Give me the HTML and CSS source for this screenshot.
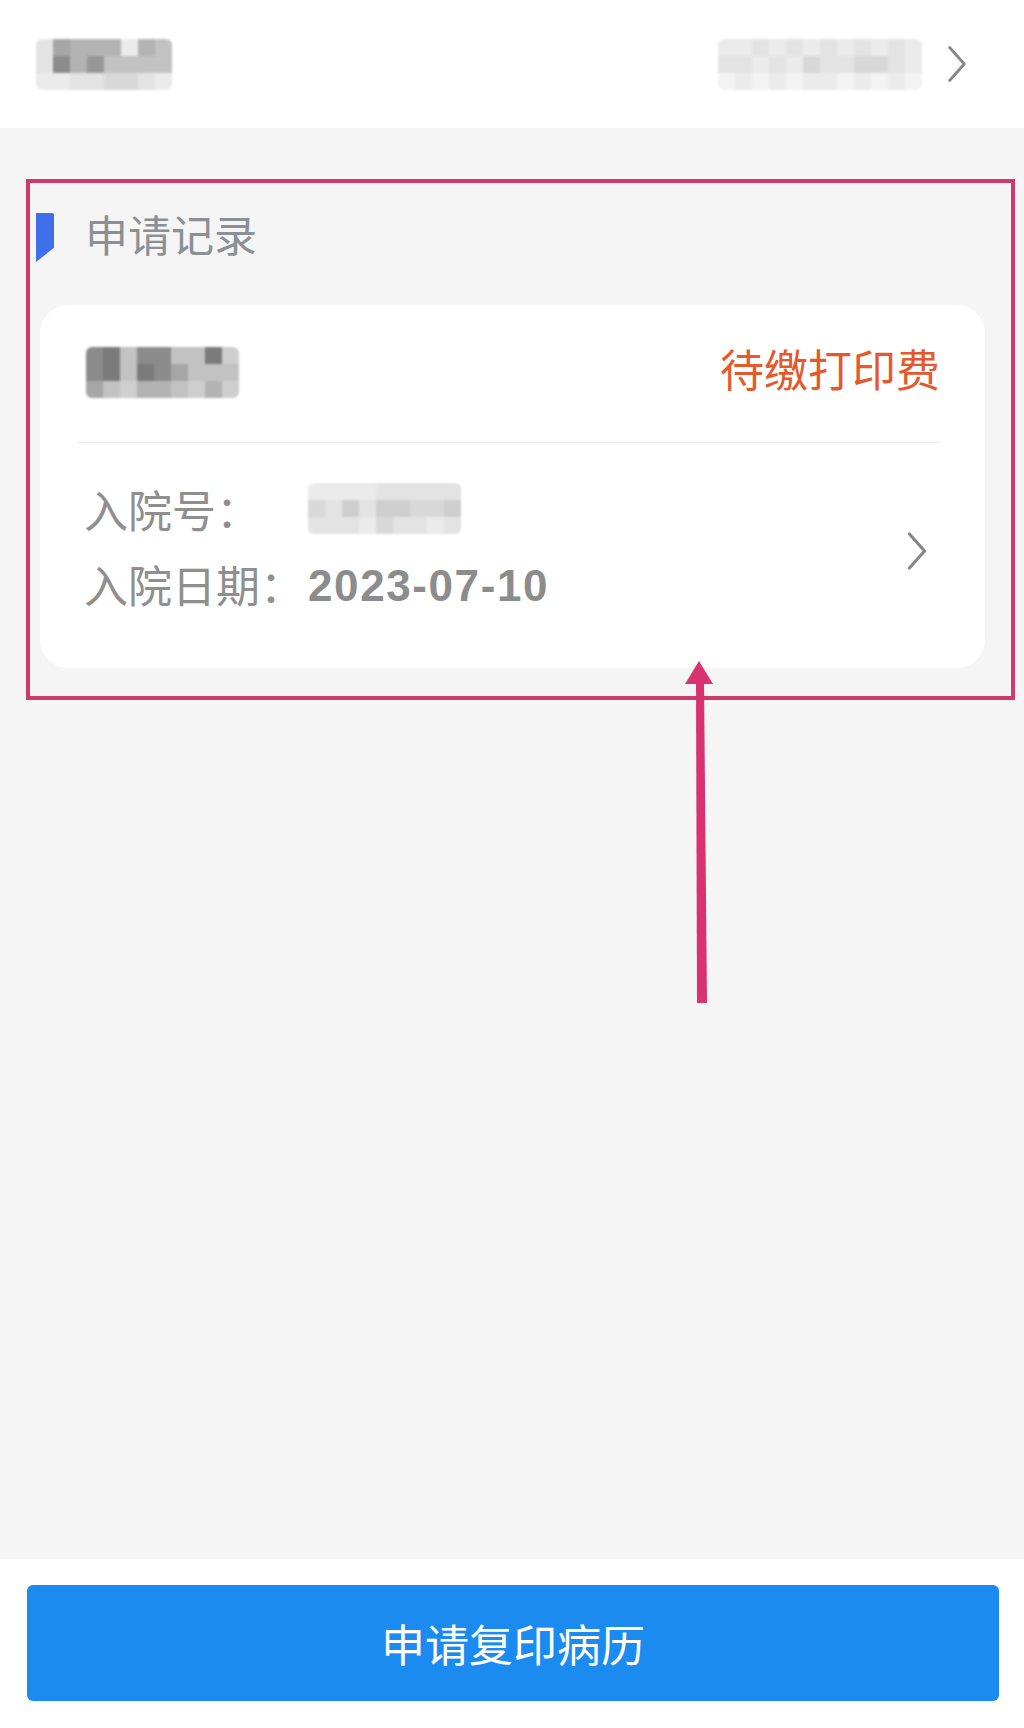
FILE: index.html
```html
<!DOCTYPE html>
<html lang="zh-CN">
<head>
<meta charset="utf-8">
<title>申请记录</title>
<link rel="stylesheet" href="styles.css">
</head>
<body>
<div class="page">
  <header class="topbar">
    <div class="mosaic cols8">
      <i class="t1"></i><i class="t6"></i><i class="t5"></i><i class="t5"></i><i class="t5"></i><i class="t0"></i><i class="t5"></i><i class="t4"></i>
      <i class="t1"></i><i class="t8"></i><i class="t5"></i><i class="t7"></i><i class="t4"></i><i class="t4"></i><i class="t4"></i><i class="t4"></i>
      <i class="t0"></i><i class="t0"></i><i class="t1"></i><i class="t1"></i><i class="t2"></i><i class="t2"></i><i class="t1"></i><i class="t0"></i>
    </div>
    <div class="topbar-right">
      <div class="mosaic cols12">
        <i class="t0"></i><i class="t0"></i><i class="t1"></i><i class="t0"></i><i class="t1"></i><i class="t0"></i><i class="t1"></i><i class="t0"></i><i class="t1"></i><i class="t0"></i><i class="t1"></i><i class="t0"></i>
        <i class="t1"></i><i class="t1"></i><i class="t0"></i><i class="t1"></i><i class="t0"></i><i class="t2"></i><i class="t1"></i><i class="t1"></i><i class="t2"></i><i class="t2"></i><i class="t1"></i><i class="t0"></i>
        <i class="tw"></i><i class="t0"></i><i class="tw"></i><i class="t0"></i><i class="tw"></i><i class="t0"></i><i class="t0"></i><i class="tw"></i><i class="t0"></i><i class="tw"></i><i class="t0"></i><i class="tw"></i>
      </div>
      <svg class="chev chev-top" viewBox="0 0 22 40"><polyline points="3,2 19,20 3,38"/></svg>
    </div>
  </header>

  <main class="content">
    <div class="section-title">
      <span class="marker"></span>
      <h2>申请记录</h2>
    </div>

    <div class="card">
      <div class="card-head">
        <div class="mosaic cols9">
          <i class="t8"></i><i class="t9"></i><i class="t4"></i><i class="t8"></i><i class="t8"></i><i class="t4"></i><i class="t4"></i><i class="t9"></i><i class="t3"></i>
          <i class="t8"></i><i class="t9"></i><i class="t4"></i><i class="t9"></i><i class="t8"></i><i class="t6"></i><i class="t4"></i><i class="t4"></i><i class="t4"></i>
          <i class="t6"></i><i class="t4"></i><i class="t3"></i><i class="t5"></i><i class="t5"></i><i class="t4"></i><i class="t3"></i><i class="t5"></i><i class="t3"></i>
        </div>
        <span class="status">待缴打印费</span>
      </div>
      <div class="divider"></div>
      <div class="card-body">
        <div class="fields">
          <span class="label">入院号：</span>
          <span class="value">
            <span class="mosaic cols9 small">
              <i class="t0"></i><i class="t0"></i><i class="t0"></i><i class="t0"></i><i class="t1"></i><i class="t1"></i><i class="t1"></i><i class="t1"></i><i class="t1"></i>
              <i class="t2"></i><i class="t1"></i><i class="t3"></i><i class="t1"></i><i class="t3"></i><i class="t3"></i><i class="t2"></i><i class="t2"></i><i class="t3"></i>
              <i class="t1"></i><i class="t1"></i><i class="t1"></i><i class="t0"></i><i class="t2"></i><i class="t1"></i><i class="t1"></i><i class="t0"></i><i class="t1"></i>
            </span>
          </span>
          <span class="label">入院日期：</span>
          <span class="value date">2023-07-10</span>
        </div>
        <svg class="chev chev-card" viewBox="0 0 22 40"><polyline points="3,2 19,20 3,38"/></svg>
      </div>
    </div>
  </main>

  <footer class="bottombar">
    <button class="primary">申请复印病历</button>
  </footer>

  <div class="annot-box"></div>
  <svg class="annot-arrow" viewBox="0 0 32 348">
    <polygon points="15,3 1,26 29,26"/>
    <polygon points="12,24 20,24 23,345 13,345"/>
  </svg>
</div>
</body>
</html>
```

FILE: styles.css
```css
* { box-sizing: border-box; }

html, body {
  margin: 0;
  padding: 0;
}

body {
  font-family: "Noto Sans CJK SC", "Noto Sans", sans-serif;
  background: #f5f5f6;
}

.page {
  position: relative;
  width: 1024px;
  min-height: 1728px;
  display: flex;
  flex-direction: column;
}

/* ---------- top bar ---------- */
.topbar {
  height: 128px;
  background: #ffffff;
  display: flex;
  align-items: center;
  justify-content: space-between;
  padding: 0 57px 0 36px;
}

.topbar-right {
  display: flex;
  align-items: center;
  gap: 25px;
}

/* ---------- mosaic (pixelated blur) ---------- */
.mosaic {
  display: grid;
  grid-auto-rows: 17px;
  filter: blur(1.2px);
  border-radius: 6px;
  overflow: hidden;
}
.mosaic i { display: block; }
.cols8 { grid-template-columns: repeat(8, 17px); }
.cols9 { grid-template-columns: repeat(9, 17px); }
.cols12 { grid-template-columns: repeat(12, 17px); }

.tw { background: #f3f3f3; }
.t0 { background: #ebebeb; }
.t1 { background: #e3e3e3; }
.t2 { background: #d8d8d8; }
.t3 { background: #cecece; }
.t4 { background: #c2c2c2; }
.t5 { background: #b3b3b3; }
.t6 { background: #a6a6a6; }
.t7 { background: #979797; }
.t8 { background: #8b8b8b; }
.t9 { background: #7b7b7b; }

/* ---------- chevrons ---------- */
.chev {
  display: block;
  fill: none;
  stroke: #868686;
  stroke-width: 3.2;
  stroke-linecap: round;
  stroke-linejoin: round;
}
.chev-top { width: 20px; height: 38px; }
.chev-card { width: 22px; height: 38px; margin-top: 8px; }

/* ---------- content ---------- */
.content {
  flex: 1;
  padding: 85px 39px 0 40px;
}

.section-title {
  display: flex;
  align-items: flex-start;
  height: 49px;
  margin-left: -4px;
}

.marker {
  width: 18px;
  height: 49px;
  background: #3f70ea;
  clip-path: polygon(0 0, 100% 0, 100% 71%, 0 100%);
  border-top-right-radius: 2px;
}

.section-title h2 {
  margin: 0 0 0 31px;
  font-size: 43px;
  line-height: 40px;
  font-weight: 400;
  color: #8a9094;
}

.card {
  margin-top: 43px;
  background: #ffffff;
  border-radius: 28px;
  height: 363px;
}

.card-head {
  height: 137px;
  display: flex;
  align-items: center;
  justify-content: space-between;
  padding: 0 45px 2px 46px;
}

.status {
  font-size: 44px;
  line-height: 50px;
  color: #e45a2d;
  margin-top: -10px;
}

.divider {
  height: 1px;
  background: #ececec;
  margin: 0 45px 0 37px;
}

.card-body {
  display: flex;
  align-items: center;
  justify-content: space-between;
  padding: 29px 57px 46px 44px;
}

.fields {
  display: grid;
  grid-template-columns: 224px auto;
  grid-auto-rows: 75px;
  align-items: center;
}

.label {
  font-size: 44px;
  line-height: 75px;
  color: #8f8f8f;
}

.value {
  display: flex;
  align-items: center;
  height: 75px;
}

.mosaic.small { margin-top: -2px; }

.date {
  font-family: "Liberation Sans", Arial, sans-serif;
  font-weight: 700;
  font-size: 44px;
  letter-spacing: 1.6px;
  color: #8c8c8c;
  padding-top: 2px;
}

/* ---------- bottom bar ---------- */
.bottombar {
  height: 169px;
  background: #ffffff;
  padding: 26px 25px 0 27px;
}

.primary {
  display: block;
  width: 100%;
  height: 116px;
  border: none;
  border-radius: 6px;
  background: #1b8bf0;
  color: #ffffff;
  font-family: "Noto Sans CJK SC", sans-serif;
  font-size: 44px;
  font-weight: 400;
  padding: 0;
}

/* ---------- annotation overlay ---------- */
.annot-box {
  position: absolute;
  left: 26px;
  top: 179px;
  width: 989px;
  height: 521px;
  border: 4px solid #cf3a6c;
  pointer-events: none;
}

.annot-arrow {
  position: absolute;
  left: 684px;
  top: 658px;
  width: 32px;
  height: 348px;
  fill: #d8336f;
}
```
